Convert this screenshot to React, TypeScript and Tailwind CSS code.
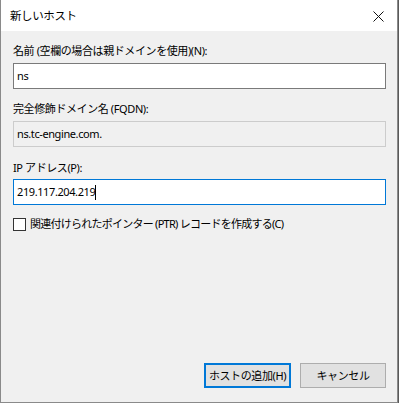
import React from 'react';

const font = { fontFamily: '"Noto Sans", "Noto Sans CJK JP", sans-serif' };

const NewHostDialog: React.FC = () => {
  return (
    <div className="w-[399px] h-[403px] bg-[#5a5a5a] flex" style={font}>
      <div className="w-[398px] h-[403px] flex flex-col border-l border-r border-b border-[#8a8a8a] bg-[#f0f0f0] text-[11px] leading-[16px] tracking-[-0.4px] text-black">
        {/* Title bar */}
        <div className="h-[31px] bg-white flex items-center justify-between pl-[9px] pr-[13px]">
          <span className="text-[11.5px]">新しいホスト</span>
          <svg width="11" height="11" viewBox="0 0 11 11" className="mt-[1px]">
            <path d="M0.5 0.5 L10.5 10.5 M10.5 0.5 L0.5 10.5" stroke="#111" strokeWidth="1" />
          </svg>
        </div>

        {/* Body */}
        <div className="flex-1 flex flex-col pl-3 pr-[11px] pt-[12px] pb-[14px]">
          <label>名前 (空欄の場合は親ドメインを使用)(N):</label>
          <div className="mt-[4px] h-[26px] border border-[#7a7a7a] bg-white flex items-center px-[3px]">ns</div>

          <label className="mt-[12px]">完全修飾ドメイン名 (FQDN):</label>
          <div className="mt-[4px] h-[26px] border border-[#cccccc] bg-[#f0f0f0] flex items-center px-[3px]">
            ns.tc-engine.com.
          </div>

          <label className="mt-[13px]">IP アドレス(P):</label>
          <div className="mt-[3px] h-[26px] border border-[#0078d7] bg-white flex items-center px-[3px]">
            <span>219.117.204.219</span>
            <span className="w-px h-[15px] bg-black" />
          </div>

          <div className="mt-[11px] flex items-center gap-[4px]">
            <span className="w-[13px] h-[13px] border border-[#333333] bg-white" />
            <span className="tracking-[-0.75px]">関連付けられたポインター (PTR) レコードを作成する(C)</span>
          </div>

          <div className="mt-auto flex justify-end gap-[9px]">
            <button className="w-[87px] h-[25px] border-2 border-[#0078d7] bg-[#e1e1e1] leading-none whitespace-nowrap">
              ホストの追加(H)
            </button>
            <button className="w-[86px] h-[25px] border border-[#adadad] bg-[#e1e1e1] leading-none whitespace-nowrap">
              キャンセル
            </button>
          </div>
        </div>
      </div>
    </div>
  );
};

export default function App() {
  return <NewHostDialog />;
}
